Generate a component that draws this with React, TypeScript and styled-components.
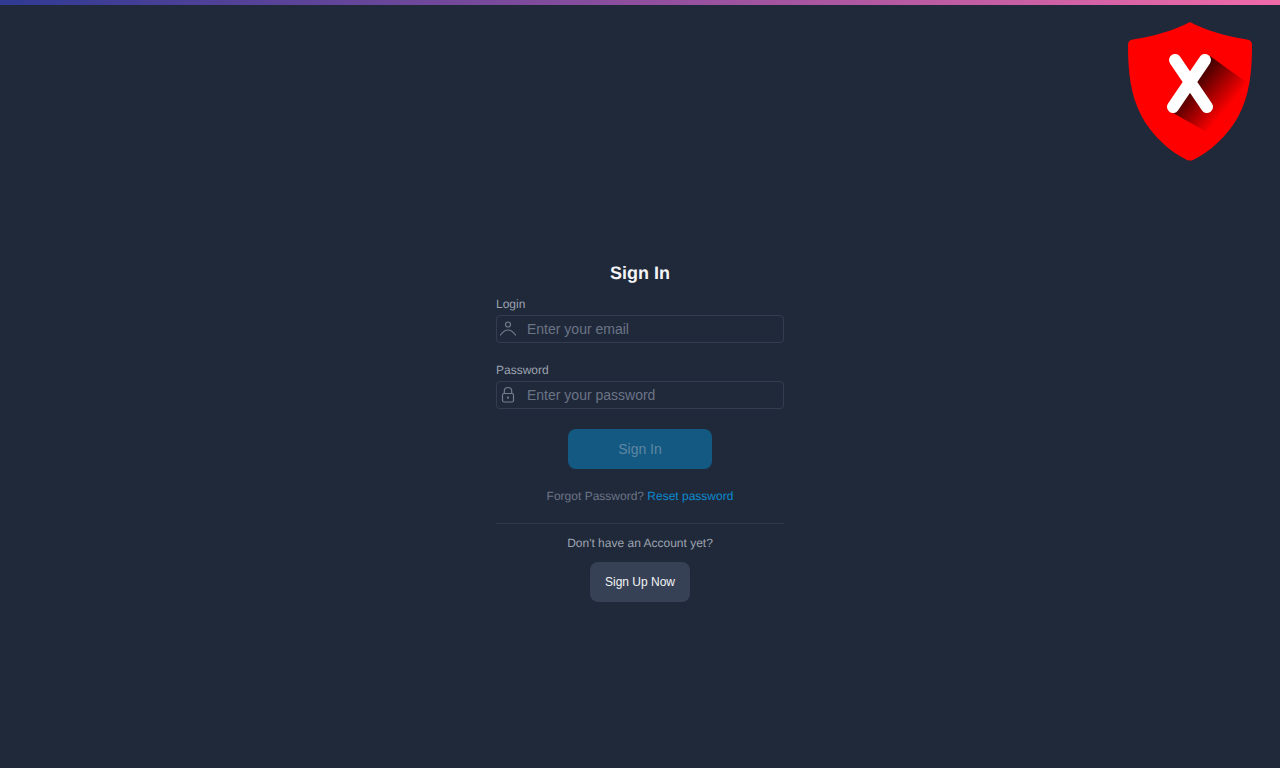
import React from 'react';
import styled, { createGlobalStyle } from 'styled-components';

const GlobalStyle = createGlobalStyle`
  html, body {
    margin: 0;
    padding: 0;
    height: 100%;
    background-color: #20293a;
  }
  * {
    box-sizing: border-box;
  }
`;

const Page = styled.div`
  min-height: 768px;
  height: 100vh;
  overflow: hidden;
  background-color: #20293a;
  font-family: "Liberation Sans", Arial, sans-serif;
  text-rendering: geometricPrecision;
  display: flex;
  flex-direction: column;
  align-items: center;
`;

const TopBar = styled.div`
  width: 100%;
  height: 5px;
  flex: none;
  background: linear-gradient(90deg, #2f3a93 0%, #8f4f9e 50%, #f06aa8 100%);
`;

const Badge = styled.svg`
  position: absolute;
  top: 10px;
  right: 10px;
  width: 160px;
  height: 160px;
`;

const Form = styled.form`
  width: 288px;
  margin-top: 257px;
  display: flex;
  flex-direction: column;
`;

const Title = styled.h1`
  margin: 0 0 12px;
  font-size: 18px;
  line-height: 22px;
  font-weight: bold;
  text-align: center;
  color: #f3f4f6;
`;

const Fields = styled.div`
  display: flex;
  flex-direction: column;
  gap: 19px;
  margin-bottom: 20px;
`;

const Field = styled.div`
  display: flex;
  flex-direction: column;
  gap: 3px;
`;

const Label = styled.label`
  font-size: 12px;
  line-height: 16px;
  height: 16px;
  color: #9ca3af;
`;

const InputBox = styled.div`
  height: 28px;
  display: flex;
  align-items: center;
  padding-left: 3px;
  border: 1px solid #333d4f;
  border-radius: 4px;
`;

const IconSlot = styled.svg`
  width: 18px;
  height: 18px;
  flex: none;
  fill: none;
  stroke: #747d8d;
  stroke-width: 1.2;
  stroke-linecap: round;
  stroke-linejoin: round;
`;

const Input = styled.input`
  flex: 1;
  min-width: 0;
  height: 100%;
  margin-left: 9px;
  padding: 0;
  border: none;
  outline: none;
  background: transparent;
  font-family: inherit;
  font-size: 14px;
  color: #e5e7eb;

  &::placeholder {
    color: #6b7486;
    opacity: 1;
  }
`;

const Button = styled.button<{ $primary?: boolean }>`
  align-self: center;
  height: 40px;
  width: ${(p) => (p.$primary ? '144px' : '100px')};
  border: none;
  border-radius: 8px;
  font-family: inherit;
  font-size: ${(p) => (p.$primary ? '14px' : '12px')};
  color: ${(p) => (p.$primary ? '#5f87a3' : '#f3f4f6')};
  background-color: ${(p) => (p.$primary ? '#135982' : '#374155')};
`;

const ForgotRow = styled.p`
  margin: 19px 0 0;
  font-size: 12px;
  line-height: 16px;
  text-align: center;
  color: #6b7486;
`;

const ResetLink = styled.a`
  color: #0c8ad0;
  text-decoration: none;
`;

const Divider = styled.hr`
  width: 100%;
  margin: 19px 0 0;
  border: none;
  border-top: 1px solid #2f3a4b;
`;

const SignUpText = styled.p`
  margin: 11px 0 11px;
  font-size: 12px;
  line-height: 16px;
  text-align: center;
  color: #9ca3af;
`;

function ShieldBadge() {
  return (
    <Badge viewBox="0 0 160 160" aria-hidden="true">
      <defs>
        <linearGradient id="shadowFade" gradientUnits="userSpaceOnUse" x1="80" y1="70" x2="116" y2="100">
          <stop offset="0" stopColor="#300000" />
          <stop offset="1" stopColor="#ff0000" />
        </linearGradient>
      </defs>
      <path
        fill="#ff0000"
        d="M80 12 C95 20 118 27 137 29.5 Q142 30 142 35 C142 60 140 85 128 107 C118 125 100 142 83 150 Q80 151 77 150 C60 142 42 125 32 107 C20 85 18 60 18 35 Q18 30 23 29.5 C42 27 65 20 80 12 Z"
      />
      <polygon fill="url(#shadowFade)" points="100,46 136,72 100,124 63,103" />
      <path d="M65 50 L97 97 M95 50 L63 97" stroke="#ffffff" strokeWidth="12" strokeLinecap="round" fill="none" />
    </Badge>
  );
}

function UserIcon() {
  return (
    <IconSlot viewBox="0 0 18 18">
      <circle cx="8" cy="4.5" r="2.5" />
      <path d="M0.5 15 C3 11.5 5.5 10 8 10 C10.5 10 13 11.5 15.5 15" />
    </IconSlot>
  );
}

function LockIcon() {
  return (
    <IconSlot viewBox="0 0 18 18">
      <rect x="2.5" y="7.5" width="11" height="8.5" rx="1.5" />
      <path d="M4.3 7.5 V5 C4.3 2.8 5.8 1.5 8 1.5 C10.2 1.5 11.7 2.8 11.7 5 V7.5" />
      <circle cx="8" cy="11.7" r="0.5" />
    </IconSlot>
  );
}

export default function App() {
  return (
    <Page>
      <GlobalStyle />
      <TopBar />
      <ShieldBadge />
      <Form onSubmit={(e) => e.preventDefault()}>
        <Title>Sign In</Title>
        <Fields>
          <Field>
            <Label htmlFor="login">Login</Label>
            <InputBox>
              <UserIcon />
              <Input id="login" type="email" placeholder="Enter your email" />
            </InputBox>
          </Field>
          <Field>
            <Label htmlFor="password">Password</Label>
            <InputBox>
              <LockIcon />
              <Input id="password" type="password" placeholder="Enter your password" />
            </InputBox>
          </Field>
        </Fields>
        <Button $primary type="submit">Sign In</Button>
        <ForgotRow>
          Forgot Password? <ResetLink href="#">Reset password</ResetLink>
        </ForgotRow>
        <Divider />
        <SignUpText>Don't have an Account yet?</SignUpText>
        <Button type="button">Sign Up Now</Button>
      </Form>
    </Page>
  );
}
